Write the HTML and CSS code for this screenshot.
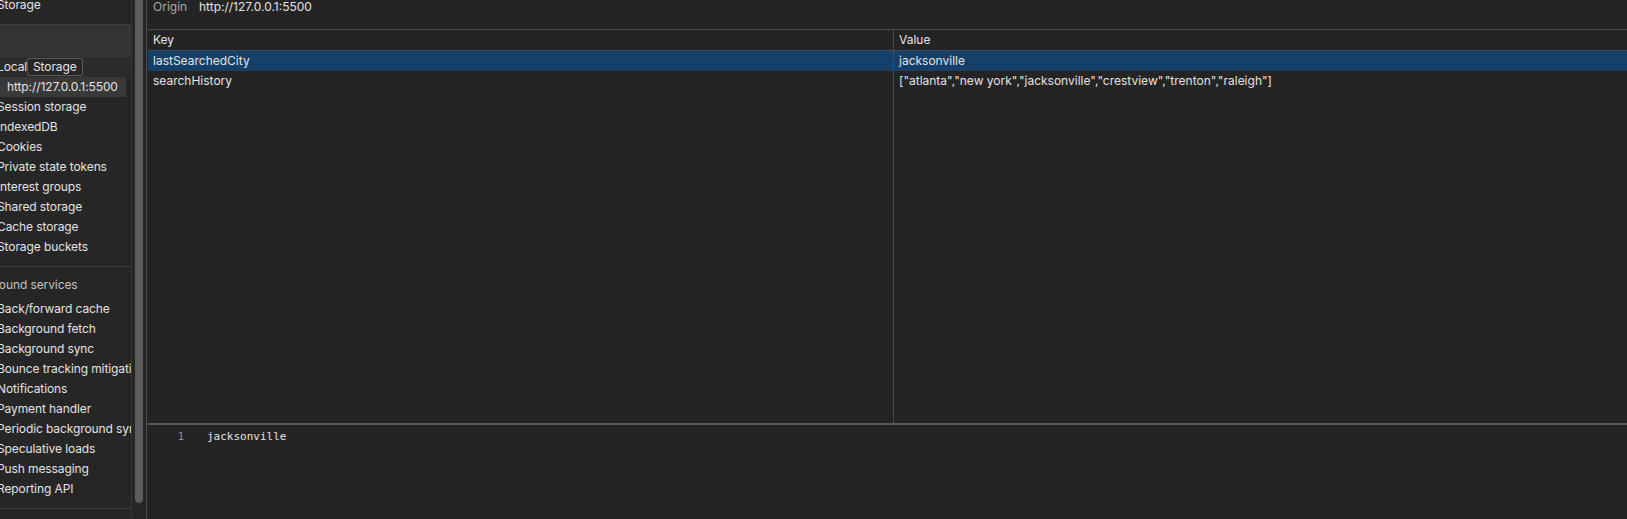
FILE: index.html
```html
<!DOCTYPE html>
<html>
<head>
<meta charset="utf-8">
<link rel="stylesheet" href="styles.css">
</head>
<body>
<div class="app">
  <aside class="sidebar">
    <div class="tree">
      <div class="item">Storage</div>
      <div class="sep"></div>
      <div class="band"></div>
      <div class="item hover">Local Storage<span class="tip">Storage</span></div>
      <div class="item child selected">http://127.0.0.1:5500</div>
      <div class="item">Session storage</div>
      <div class="item">IndexedDB</div>
      <div class="item">Cookies</div>
      <div class="item">Private state tokens</div>
      <div class="item">Interest groups</div>
      <div class="item">Shared storage</div>
      <div class="item">Cache storage</div>
      <div class="item">Storage buckets</div>
      <div class="sep"></div>
      <div class="section-head">Background services</div>
      <div class="item">Back/forward cache</div>
      <div class="item">Background fetch</div>
      <div class="item">Background sync</div>
      <div class="item">Bounce tracking mitigations</div>
      <div class="item">Notifications</div>
      <div class="item">Payment handler</div>
      <div class="item">Periodic background sync</div>
      <div class="item">Speculative loads</div>
      <div class="item">Push messaging</div>
      <div class="item">Reporting API</div>
      <div class="sep"></div>
    </div>
  </aside>
  <div class="gutter"><div class="thumb"></div></div>
  <main class="main">
    <div class="origin"><span class="origin-label">Origin</span><span class="origin-value">http://127.0.0.1:5500</span></div>
    <div class="table">
      <div class="row head"><div class="cell key">Key</div><div class="cell">Value</div></div>
      <div class="row selected"><div class="cell key">lastSearchedCity</div><div class="cell">jacksonville</div></div>
      <div class="row"><div class="cell key">searchHistory</div><div class="cell">["atlanta","new york","jacksonville","crestview","trenton","raleigh"]</div></div>
      <div class="row filler"><div class="cell key"></div><div class="cell"></div></div>
    </div>
    <div class="editor">
      <div class="line"><span class="ln">1</span><span class="code">jacksonville</span></div>
    </div>
  </main>
</div>
</body>
</html>
```

FILE: styles.css
```css
html, body {
  margin: 0;
  padding: 0;
  background: #242424;
}
body {
  font-family: Inter, "Liberation Sans", Arial, sans-serif;
  font-size: 12px;
  color: #e3e3e3;
}
.app {
  display: flex;
  width: 1627px;
  height: 519px;
  overflow: hidden;
}
.sidebar {
  width: 131px;
  flex: none;
  background: #262626;
  border-right: 1px solid #343434;
  overflow: hidden;
  letter-spacing: -0.1px;
}
.tree {
  margin-top: -5px;
}
.item {
  position: relative;
  height: 20px;
  line-height: 20px;
  text-indent: -3px;
  white-space: nowrap;
}
.item.hover {
  background: #2b2b2b;
}
.item.child {
  text-indent: 7px;
  margin-right: 5px;
}
.item.selected {
  background: #393939;
}
.tip {
  position: absolute;
  left: 27px;
  top: 1px;
  height: 16px;
  line-height: 16px;
  padding: 0 5px;
  text-indent: 0;
  background: #262626;
  border: 1px solid #5a5a5a;
  border-radius: 2px;
  color: #e3e3e3;
}
.sep {
  height: 1px;
  background: #3f3f3f;
  margin-top: 9px;
}
.band {
  height: 32px;
  background: #343434;
}
.section-head {
  height: 32px;
  box-sizing: border-box;
  padding-top: 10px;
  line-height: 16px;
  text-indent: -40px;
  color: #c2c2c2;
  white-space: nowrap;
}
.gutter {
  width: 14px;
  flex: none;
  background: #262626;
}
.thumb {
  margin-left: 3px;
  width: 8px;
  height: 503px;
  background: #5c5c5c;
  border-radius: 0 0 4px 4px;
}
.main {
  flex: 1;
  display: flex;
  flex-direction: column;
  border-left: 1px solid #4c4c4c;
  min-width: 0;
}
.origin {
  height: 29px;
  border-bottom: 1px solid #4a4a4a;
  margin-left: 1px;
  line-height: 14px;
  white-space: nowrap;
}
.origin-label {
  display: inline-block;
  margin-left: 5px;
  width: 46px;
  color: #a8a8a8;
}
.table {
  flex: 1;
  display: flex;
  flex-direction: column;
  margin-left: 1px;
}
.row {
  display: grid;
  grid-template-columns: 746px 1fr;
  height: 20px;
  line-height: 20px;
  white-space: nowrap;
}
.row.head {
  border-bottom: 1px solid #4a4a4a;
}
.row.selected {
  background: #15406a;
}
.row.filler {
  flex: 1;
}
.cell {
  padding-left: 5px;
  overflow: hidden;
}
.cell.key {
  border-right: 1px solid #474747;
}
.editor {
  height: 94px;
  border-top: 2px solid #575757;
  margin-left: 1px;
  font-family: "DejaVu Sans Mono", "Liberation Mono", monospace;
  font-size: 11px;
}
.line {
  display: flex;
  padding-top: 4px;
  line-height: 15px;
}
.ln {
  width: 36px;
  text-align: right;
  color: #8c8c8c;
}
.code {
  padding-left: 23px;
  color: #e3e3e3;
}
```
